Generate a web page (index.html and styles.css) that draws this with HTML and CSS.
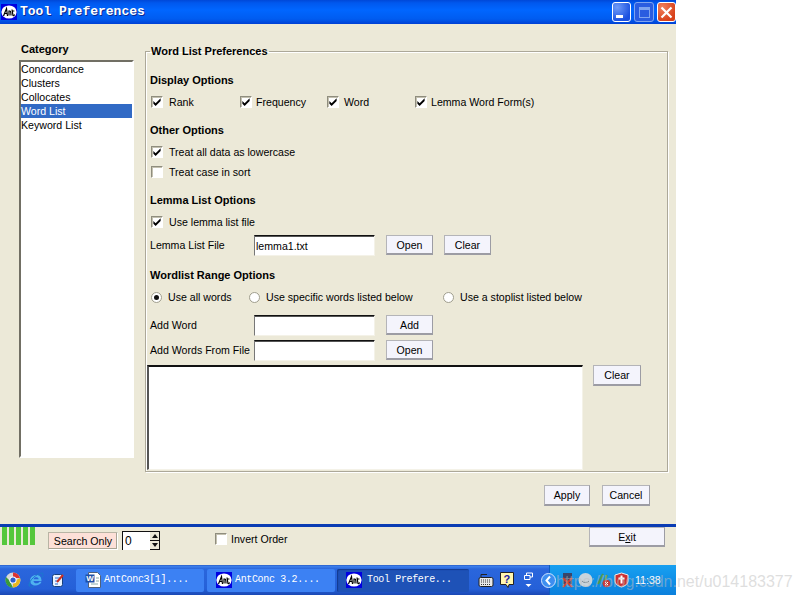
FILE: index.html
```html
<!DOCTYPE html>
<html lang="en">
<head>
<meta charset="utf-8">
<title>Tool Preferences</title>
<link rel="stylesheet" href="styles.css">
</head>
<body>
<svg class="defs" width="0" height="0" aria-hidden="true">
  <symbol id="ant" viewBox="0 0 16 16">
    <rect width="16" height="16" fill="#0000e0"/>
    <ellipse cx="8" cy="8" rx="7.6" ry="6.6" fill="#fff"/>
    <path d="M2.5 12 5.5 4.5 6.5 12M3.6 9.5H6.5M8 6.5V11.5M8 7.5Q10 5.5 10 11.5M11 5.5 12 11.5Q13 12 13.6 10.5M10.8 7H13.4" fill="none" stroke="#000" stroke-width="1.2"/>
  </symbol>
  <symbol id="tick" viewBox="0 0 11 11">
    <path d="M1.500 4.500 4 7 9.500 1.500v3L4 10 1.500 7.500Z" fill="#000"/>
  </symbol>
</svg>
<div class="window">
  <header class="titlebar">
    <svg class="title-icon"><use href="#ant"/></svg>
    <span class="title-text">Tool Preferences</span>
    <div class="title-buttons">
      <span class="wbtn wbtn-min"><i class="min-glyph"></i></span>
      <span class="wbtn wbtn-max"><i class="max-glyph"></i></span>
      <span class="wbtn wbtn-close">
        <svg width="13" height="13" viewBox="0 0 13 13"><path d="M1.500 1.500 11.500 11.500M11.500 1.500 1.500 11.500" stroke="#fff" stroke-width="2.200"/></svg>
      </span>
    </div>
  </header>

  <main class="content">
    <div class="panes">
      <aside class="category">
        <div class="category-label">Category</div>
        <ul class="list">
          <li>Concordance</li>
          <li>Clusters</li>
          <li>Collocates</li>
          <li class="selected">Word List</li>
          <li>Keyword List</li>
        </ul>
      </aside>
      <fieldset class="prefs">
        <legend>Word List Preferences</legend>

        <h3 class="section first">Display Options</h3>
        <div class="row">
          <label class="opt opt-rank"><span class="check"><svg><use href="#tick"/></svg></span>Rank</label>
          <label class="opt opt-freq"><span class="check"><svg><use href="#tick"/></svg></span>Frequency</label>
          <label class="opt opt-word"><span class="check"><svg><use href="#tick"/></svg></span>Word</label>
          <label class="opt opt-lemma"><span class="check"><svg><use href="#tick"/></svg></span>Lemma Word Form(s)</label>
        </div>

        <h3 class="section">Other Options</h3>
        <div class="row"><label class="opt"><span class="check"><svg><use href="#tick"/></svg></span>Treat all data as lowercase</label></div>
        <div class="row"><label class="opt"><span class="check"></span>Treat case in sort</label></div>

        <h3 class="section">Lemma List Options</h3>
        <div class="row"><label class="opt"><span class="check"><svg><use href="#tick"/></svg></span>Use lemma list file</label></div>
        <div class="row field-row mt3">
          <span class="field-label">Lemma List File</span>
          <span class="input">lemma1.txt</span>
          <button class="btn btn-s">Open</button>
          <button class="btn btn-s">Clear</button>
        </div>

        <h3 class="section s-range">Wordlist Range Options</h3>
        <div class="row">
          <label class="opt opt-all"><span class="radio on"></span>Use all words</label>
          <label class="opt opt-spec"><span class="radio"></span>Use specific words listed below</label>
          <label class="opt"><span class="radio"></span>Use a stoplist listed below</label>
        </div>
        <div class="row field-row mt8">
          <span class="field-label">Add Word</span>
          <span class="input"></span>
          <button class="btn btn-s">Add</button>
        </div>
        <div class="row field-row mt4">
          <span class="field-label">Add Words From File</span>
          <span class="input"></span>
          <button class="btn btn-s">Open</button>
        </div>
        <div class="area-row">
          <div class="area"></div>
          <button class="btn btn-s">Clear</button>
        </div>
      </fieldset>
    </div>
    <div class="actions">
      <button class="btn btn-apply">Apply</button>
      <button class="btn btn-cancel">Cancel</button>
    </div>
  </main>

  <div class="status">
    <div class="progress"><i></i><i></i><i></i><i></i><i></i></div>
    <div class="search-only">Search Only</div>
    <div class="spinner">
      <span class="spin-value">0</span>
      <span class="spin-btns">
        <span class="spin-btn"><i class="arrow-up"></i></span>
        <span class="spin-btn"><i class="arrow-down"></i></span>
      </span>
    </div>
    <label class="opt opt-invert"><span class="check"></span>Invert Order</label>
    <button class="btn btn-exit">E<u>x</u>it</button>
  </div>

  <footer class="taskbar">
    <div class="quick">
      <svg width="16" height="16" viewBox="0 0 16 16"><circle cx="8" cy="8" r="7.500" fill="#d8d8d8"/><path d="M8 .5A7.500 7.500 0 0 1 15 6H8Z" fill="#d33"/><path d="M15 6A7.500 7.500 0 0 1 8 15.500L8 10Z" fill="#e8b820"/><path d="M8 15.500A7.500 7.500 0 0 1 1 5L4 8Z" fill="#3a9a3a"/><circle cx="8" cy="8" r="3.600" fill="#fff"/><circle cx="8" cy="8" r="2.600" fill="#2a5fd0"/></svg>
      <svg width="16" height="16" viewBox="0 0 16 16"><path d="M2 8.500C2.500 4.500 5.500 3 8.500 3s5 2 5 6H5.500c.3 3 4.500 3 6 .7h2C11.500 15 2 15 2 8.500ZM5.600 7.200h5C10.500 4.800 6 4.700 5.600 7.200Z" fill="#4fb2f0"/><path d="M1 14C0 9 9 1 14.500 1c1.500 2-.5 4-1 5M2 10c-2 5 0 6 4 4.500" fill="none" stroke="#1b78d0"/></svg>
      <svg width="14" height="16" viewBox="0 0 14 16"><rect x="1.500" y="2.500" width="10" height="12" rx="2" fill="#e8f2ff" stroke="#18407c"/><path d="M4 6h5M4 9h4M4 12h3" stroke="#2a6ad0"/><path d="M6 10 12 3" stroke="#d03020" stroke-width="2"/></svg>
    </div>
    <div class="task">
      <svg class="task-icon" width="16" height="16" viewBox="0 0 16 16"><path d="M3.500.500h9l3 3v12h-12Z" fill="#fff" stroke="#50607a"/><rect x="0.500" y="2.500" width="9" height="8" fill="#1d4fa8"/><text x="1.200" y="9.200" class="word-w">W</text><path d="M6 12h7M11 6h3M11 9h3" stroke="#8aa"/></svg>
      <span>AntConc3[1]....</span>
    </div>
    <div class="task">
      <svg class="task-icon"><use href="#ant"/></svg>
      <span>AntConc 3.2....</span>
    </div>
    <div class="task task-active">
      <svg class="task-icon"><use href="#ant"/></svg>
      <span>Tool Prefere...</span>
    </div>
    <div class="lang">
      <svg width="16" height="14" viewBox="0 0 16 14"><rect x="1" y="4.500" width="14" height="9" rx="1.500" fill="#e8e8e8" stroke="#222"/><path d="M3 7h10M3 9h10M3 11.500h10" stroke="#333" stroke-dasharray="1 1"/><path d="M3 4 3 1.500h6" fill="none" stroke="#222"/></svg>
      <svg width="14" height="16" viewBox="0 0 14 16"><path d="M.500.500h13v12H9l-1 3-2-3H.500Z" fill="#fff7b0" stroke="#222"/><text x="3.500" y="10.500" class="help-q">?</text></svg>
      <svg class="lang-views" width="9" height="16" viewBox="0 0 9 16"><path d="M2.500 3.500V1h6v4H6M.500 3.500h5.500v4H.500Z" fill="none" stroke="#fff"/><path d="M1.500 12h6L4.500 15Z" fill="#fff"/></svg>
    </div>
    <div class="tray">
      <span class="chevron"><svg width="15" height="15" viewBox="0 0 15 15"><circle cx="7.500" cy="7.500" r="7" fill="#3d8ef0" stroke="#cfe4ff"/><path d="M9 3.500 5.500 7.500 9 11.500" fill="none" stroke="#fff" stroke-width="2"/></svg></span>
      <svg width="15" height="16" viewBox="0 0 15 16"><rect x="3" y="1" width="9" height="11" fill="#39456a"/><path d="M3 6 12 15M12 6 3 15" stroke="#d04030" stroke-width="2"/></svg>
      <svg width="15" height="16" viewBox="0 0 15 16"><circle cx="7.500" cy="8" r="7" fill="#c9d4dc"/><path d="M4 9a4 3 0 0 0 7 0" fill="none" stroke="#7a8a94"/></svg>
      <svg width="15" height="16" viewBox="0 0 15 16"><path d="M2 12 7 2M7 12 11 3" stroke="#4c9a4c" stroke-width="2"/><circle cx="10.500" cy="11.500" r="3.800" fill="#c83838"/><path d="M9 10l3 3M12 10l-3 3" stroke="#fff"/></svg>
      <svg width="15" height="16" viewBox="0 0 15 16"><path d="M7.500 1 14 3v6c0 3-3 5-6.500 6C4 14 1 12 1 9V3Z" fill="#cc3030" stroke="#eee"/><path d="M7.500 3.500v8M4.500 6.500h6" stroke="#fff" stroke-width="2"/></svg>
      <span class="clock">11:38</span>
    </div>
  </footer>
  <div class="watermark">https://blog.csdn.net/u014183377</div>
</div>
</body>
</html>
```
FILE: styles.css
```css
* { box-sizing: border-box; }
html, body { margin: 0; padding: 0; background: #fff; }
body { font: 10.6px/14px "Liberation Sans", Arial, sans-serif; color: #000; }
.defs { position: absolute; }
.window { position: relative; width: 800px; height: 600px; overflow: hidden; }
.window > * { width: 676px; }

.titlebar {
  height: 24px; display: flex; align-items: center; padding-left: 1px;
  background: linear-gradient(#0048d8 0, #0058ee 3px, #0066ff 10px, #005cf0 19px, #0040d4 24px);
}
.title-icon { width: 16px; height: 16px; margin-right: 3px; }
.title-text { font: bold 13px/16px "Liberation Mono", monospace; color: #fff; text-shadow: 1px 1px 0 #0a2a90; }
.title-buttons { margin-left: auto; display: flex; gap: 3px; }
.wbtn { width: 19px; height: 20px; border-radius: 3px; border: 1px solid #fff; display: flex; align-items: center; justify-content: center; position: relative; }
.wbtn-min { background: radial-gradient(circle at 25% 25%, #6f9bf8, #1a50e0 75%); }
.wbtn-max { width: 20px; background: #2a5ce0; border-color: #7ea4f0; }
.wbtn-close { background: radial-gradient(circle at 25% 25%, #f0805c, #d8411a 75%); }
.min-glyph { width: 7px; height: 3px; background: #fff; margin: 8px 5px 0 0; }
.max-glyph { width: 11px; height: 11px; border: 1px solid #7ea4f0; border-top-width: 3px; }

.content { height: 500px; background: #ece9d8; display: flex; flex-direction: column; }
.panes { display: flex; padding: 18px 0 0 19px; gap: 11px; }
.category { width: 115px; }
.category-label { font-size: 11px; font-weight: bold; padding-left: 2px; margin-bottom: 4px; }
.list { margin: 0; padding: 0; list-style: none; height: 398px; background: #fff; border: 2px solid #fff; border-color: #716f64 #fff #fff #716f64; }
.list li { height: 14px; white-space: nowrap; }
.list .selected { background: #316ac5; color: #fff; }

.prefs {
  margin: 2px 0 0; padding: 0 0 0 4px; width: 523px; height: 428px;
  border: 1px solid #aca899; box-shadow: inset 1px 1px 0 #fff, 1px 1px 0 #fff;
}
.prefs legend { font-size: 11px; font-weight: bold; padding: 0 1px; margin-left: 0; }
.section { margin: 10px 0 0; height: 16px; font-size: 11px; line-height: 16px; font-weight: bold; }
.section.first { margin-top: 14px; }
.section.s-range { margin-top: 11px; }
.row { height: 20px; display: flex; align-items: center; }
.section + .row { margin-top: 4px; }
.mt3 { margin-top: 3px; }
.mt4 { margin-top: 4px; }
.mt8 { margin-top: 8px; }
.opt { display: inline-flex; align-items: center; white-space: nowrap; }
.check { width: 12px; height: 12px; margin: 0 6px 0 1px; background: #fff; border: 1px solid #fff; border-color: #8f8d7e #fff #fff #8f8d7e; box-shadow: inset 1px 1px 0 #c4c1b0; display: inline-block; }
.check svg { display: block; width: 10px; height: 10px; }
.opt-rank { width: 89px; }
.opt-freq { width: 87px; }
.opt-freq .check { margin-right: 4px; }
.opt-word { width: 88px; }
.opt-word .check { margin-right: 5px; }
.opt-lemma .check { margin-right: 4px; }
.radio { width: 11px; height: 11px; border-radius: 50%; margin: 0 6px 0 1px; background: #fff; border: 1px solid #a09e8e; display: inline-block; position: relative; }
.radio.on::after { content: ""; position: absolute; left: 2px; top: 2px; width: 5px; height: 5px; border-radius: 50%; background: #111; }
.opt-all { width: 98px; }
.opt-spec { width: 194px; }
.row.field-row { height: 21px; }
.field-row .btn { align-self: flex-start; }
.field-label { width: 104px; padding-bottom: 2px; white-space: nowrap; }
.input { width: 121px; height: 21px; margin-right: 11px; padding: 3px 0 0 1px; background: #fff; border-top: 1px solid #111; border-left: 1px solid #777; border-right: 1px solid #f4f2e8; border-bottom: 1px solid #f4f2e8; box-shadow: inset 0 1px 0 #555; }
.btn {
  font: inherit; color: #000; padding: 0; width: 47px; height: 20px; margin: 0 11px 0 0; background: #f4f4fc;
  border: 1px solid #b4b4b8; border-right-color: #9c9ca4; border-bottom: 2px solid #9c9ca4;
}
.area-row { display: flex; align-items: flex-start; margin: 4px 0 0 -3px; }
.area { width: 436px; height: 105px; margin-right: 10px; background: #fff; border-top: 2px solid #111; border-left: 2px solid #555; border-right: 1px solid #f4f2e8; border-bottom: 1px solid #f4f2e8; }
.area-row .btn { width: 48px; height: 21px; margin: 0; }

.actions { margin-top: 13px; display: flex; justify-content: flex-end; gap: 12px; padding-right: 26px; }
.actions .btn { margin: 0; height: 21px; }
.actions .btn-apply { width: 46px; }
.actions .btn-cancel { width: 48px; }

.status { height: 41px; background: #ece9d8; border-top: 3px solid #0a3cb4; display: flex; align-items: flex-start; padding-left: 2px; }
.progress { display: flex; gap: 2px; height: 18px; width: 46px; }
.progress i { width: 5px; background: #55c73c; }
.search-only { width: 70px; height: 18px; margin-top: 5px; line-height: 17px; text-align: center; background: #fde0d8; border: 1px solid #b8b4a4; border-right-color: #fff; border-bottom-color: #fff; box-shadow: inset -1px -1px 0 #a8a494; }
.spinner { margin: 4px 0 0 4px; width: 38px; height: 19px; display: flex; background: #fff; border-top: 1px solid #111; border-left: 1px solid #111; }
.spin-value { width: 27px; padding: 2px 0 0 2px; font-size: 12px; }
.spin-btns { width: 10px; display: flex; flex-direction: column; gap: 1px; background: #111; border-bottom: 1px solid #111; border-right: 1px solid #111; }
.spin-btn { flex: 1; background: #ece9d8; display: flex; align-items: center; justify-content: center; }
.arrow-up { border: 3px solid transparent; border-top-width: 0; border-bottom: 4px solid #111; }
.arrow-down { border: 3px solid transparent; border-bottom-width: 0; border-top: 4px solid #111; }
.opt-invert { margin: 5px 0 0 54px; }
.opt-invert .check { margin-right: 4px; }
.btn.btn-exit { width: 76px; height: 20px; margin: 0 11px 0 auto; }

.taskbar {
  height: 30px; display: flex; align-items: center;
  background: linear-gradient(#1f4fbc 0, #3f82ec 1px, #2a66dc 4px, #2560d8 24px, #1a48b4 30px);
  padding-left: 5px;
}
.quick { width: 71px; flex: none; display: flex; align-items: center; gap: 7px; }
.task { width: 128px; height: 23px; flex: none; margin-right: 3px; padding-left: 9px; display: flex; align-items: center; gap: 3px; border-radius: 2px; background: #3c81f3; color: #fff; font: 10px/14px "Liberation Mono", monospace; letter-spacing: -0.35px; white-space: nowrap; }
.task-icon { width: 16px; height: 16px; flex: none; }
.task-active { width: 132px; gap: 5px; background: #1e52b7; box-shadow: inset 1px 1px 1px #123a90; margin-left: -1px; }
.word-w { font: bold 8px "Liberation Sans", sans-serif; fill: #fff; }
.help-q { font: bold 11px "Liberation Sans", sans-serif; fill: #1a1aa0; }
.lang { display: flex; align-items: center; gap: 6px; padding-left: 6px; width: 77px; flex: none; }
.lang-views { margin-left: 4px; }
.tray { flex: 1; align-self: stretch; min-width: 0; display: flex; align-items: center; gap: 3px; background: linear-gradient(#18a0f0, #1090e8 50%, #0c80dc); border-left: 1px solid #0b5cc0; }
.chevron { margin-left: -9px; margin-right: 1px; display: flex; }
.clock { color: #fff; margin-left: 3px; }

.window > .watermark { position: absolute; left: 556px; top: 571px; width: auto; font: 16px/22px "Liberation Sans", sans-serif; color: rgba(190, 190, 190, 0.5); white-space: nowrap; }
```
